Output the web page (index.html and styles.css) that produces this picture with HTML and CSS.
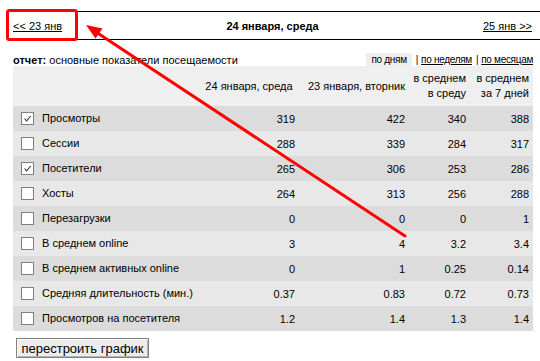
FILE: index.html
```html
<!DOCTYPE html>
<html lang="ru">
<head>
<meta charset="utf-8">
<title>Основные показатели посещаемости</title>
<link rel="stylesheet" href="styles.css">
</head>
<body>
<div class="datebar">
  <a class="nav prev" href="#">&lt;&lt; 23 янв</a>
  <b class="current">24 января, среда</b>
  <a class="nav next" href="#">25 янв &gt;&gt;</a>
</div>
<div class="content">
  <div class="report">
    <span class="report-title"><b>отчет:</b> основные показатели посещаемости</span>
    <span class="periods"><span class="period-current">по дням</span><span class="sep">|</span><a href="#">по неделям</a><span class="sep">|</span><a href="#">по месяцам</a></span>
  </div>
  <table class="stats">
    <colgroup>
      <col class="c-label"><col class="c-1"><col class="c-2"><col class="c-3"><col class="c-4">
    </colgroup>
    <thead>
      <tr>
        <th></th>
        <th class="h-center">24 января, среда</th>
        <th>23 января, вторник</th>
        <th>в среднем<br>в среду</th>
        <th>в среднем<br>за 7 дней</th>
      </tr>
    </thead>
    <tbody>
      <tr><td class="label"><span class="cb checked"><svg viewBox="0 0 11 11" width="11" height="11"><path d="M2.5 5.5 L4.6 7.8 L8.8 3" fill="none" stroke="#3a3a3a" stroke-width="1.1"/></svg></span>Просмотры</td><td>319</td><td>422</td><td>340</td><td>388</td></tr>
      <tr><td class="label"><span class="cb"></span>Сессии</td><td>288</td><td>339</td><td>284</td><td>317</td></tr>
      <tr><td class="label"><span class="cb checked"><svg viewBox="0 0 11 11" width="11" height="11"><path d="M2.5 5.5 L4.6 7.8 L8.8 3" fill="none" stroke="#3a3a3a" stroke-width="1.1"/></svg></span>Посетители</td><td>265</td><td>306</td><td>253</td><td>286</td></tr>
      <tr><td class="label"><span class="cb"></span>Хосты</td><td>264</td><td>313</td><td>256</td><td>288</td></tr>
      <tr><td class="label"><span class="cb"></span>Перезагрузки</td><td>0</td><td>0</td><td>0</td><td>1</td></tr>
      <tr><td class="label"><span class="cb"></span>В среднем online</td><td>3</td><td>4</td><td>3.2</td><td>3.4</td></tr>
      <tr><td class="label"><span class="cb"></span>В среднем активных online</td><td>0</td><td>1</td><td>0.25</td><td>0.14</td></tr>
      <tr><td class="label"><span class="cb"></span>Средняя длительность (мин.)</td><td>0.37</td><td>0.83</td><td>0.72</td><td>0.73</td></tr>
      <tr><td class="label"><span class="cb"></span>Просмотров на посетителя</td><td>1.2</td><td>1.4</td><td>1.3</td><td>1.4</td></tr>
    </tbody>
  </table>
  <button class="rebuild" type="button">перестроить график</button>
</div>
<svg class="annotation" width="540" height="361" viewBox="0 0 540 361">
  <rect x="7.5" y="10.5" width="69" height="29" rx="2" fill="none" stroke="#ff0000" stroke-width="3"/>
  <line x1="405" y1="236" x2="96" y2="32" stroke="#ff0000" stroke-width="3" stroke-linecap="round"/>
  <polygon points="86,25 102.5,28.5 95.5,38.5" fill="#ff0000"/>
</svg>
</body>
</html>
```
FILE: styles.css
```css
* { box-sizing: border-box; }

html, body {
  margin: 0;
  padding: 0;
  background: #ffffff;
}

body {
  position: relative;
  width: 540px;
  height: 361px;
  overflow: hidden;
  font-family: "Liberation Sans", Arial, sans-serif;
  font-size: 11px;
  color: #000000;
}

a { color: #000000; }

.datebar {
  margin: 11px 0 0 8px;
  height: 29px;
  border-top: 1px solid #000000;
  border-bottom: 1px solid #000000;
  padding: 0 8px 0 5px;
  display: grid;
  grid-template-columns: 1fr auto 1fr;
  align-items: center;
  font-size: 11px;
}

.datebar .prev { justify-self: start; }
.datebar .next { justify-self: end; }
.datebar .current { font-weight: bold; font-size: 11px; }

.content {
  padding: 0 7px 0 13px;
}

.report {
  margin-top: 13px;
  height: 13px;
  display: flex;
  justify-content: space-between;
  align-items: center;
}

.periods {
  display: flex;
  align-items: center;
  font-size: 10px;
  letter-spacing: -0.3px;
}

.period-current {
  background: #eeeeee;
  padding: 1px 5px 1px 5px;
  line-height: 11px;
}

.periods .sep { margin: 0 3px 0 4px; }

.stats {
  width: 520px;
  table-layout: fixed;
  border-collapse: collapse;
  border-spacing: 0;
}

.c-label { width: 186px; }
.c-1 { width: 100px; }
.c-2 { width: 110px; }
.c-3 { width: 61px; }
.c-4 { width: 63px; }

.stats thead tr {
  height: 40px;
  background: #efefef;
}

.stats th {
  font-weight: normal;
  text-align: right;
  padding: 0 4px;
  line-height: 15px;
  white-space: nowrap;
  vertical-align: middle;
}

.stats th.h-center { text-align: center; }

.stats tbody tr { height: 25px; }
.stats tbody tr:nth-child(odd) { background: #dcdcdc; }
.stats tbody tr:nth-child(even) { background: #e8e8e8; }

.stats td {
  text-align: right;
  padding: 0 4px;
  white-space: nowrap;
  vertical-align: middle;
}

.stats td.label {
  text-align: left;
  padding-left: 8px;
}

.cb {
  display: inline-flex;
  align-items: center;
  justify-content: center;
  width: 13px;
  height: 13px;
  border: 1px solid #7f7f7f;
  background: #ffffff;
  vertical-align: middle;
  margin: -2px 8px 0 0;
}

.rebuild {
  display: block;
  margin: 7px 0 0 3px;
  width: 133px;
  height: 20px;
  padding: 0;
  font-family: "Liberation Sans", Arial, sans-serif;
  font-size: 13px;
  color: #000000;
  background: #ececec;
  border: 1px solid #808080;
  box-shadow: inset 1px 1px 0 #ffffff, inset -1px -1px 0 #b4b4b4;
  border-radius: 0;
}

.annotation {
  position: absolute;
  top: 0;
  left: 0;
  pointer-events: none;
}
```
